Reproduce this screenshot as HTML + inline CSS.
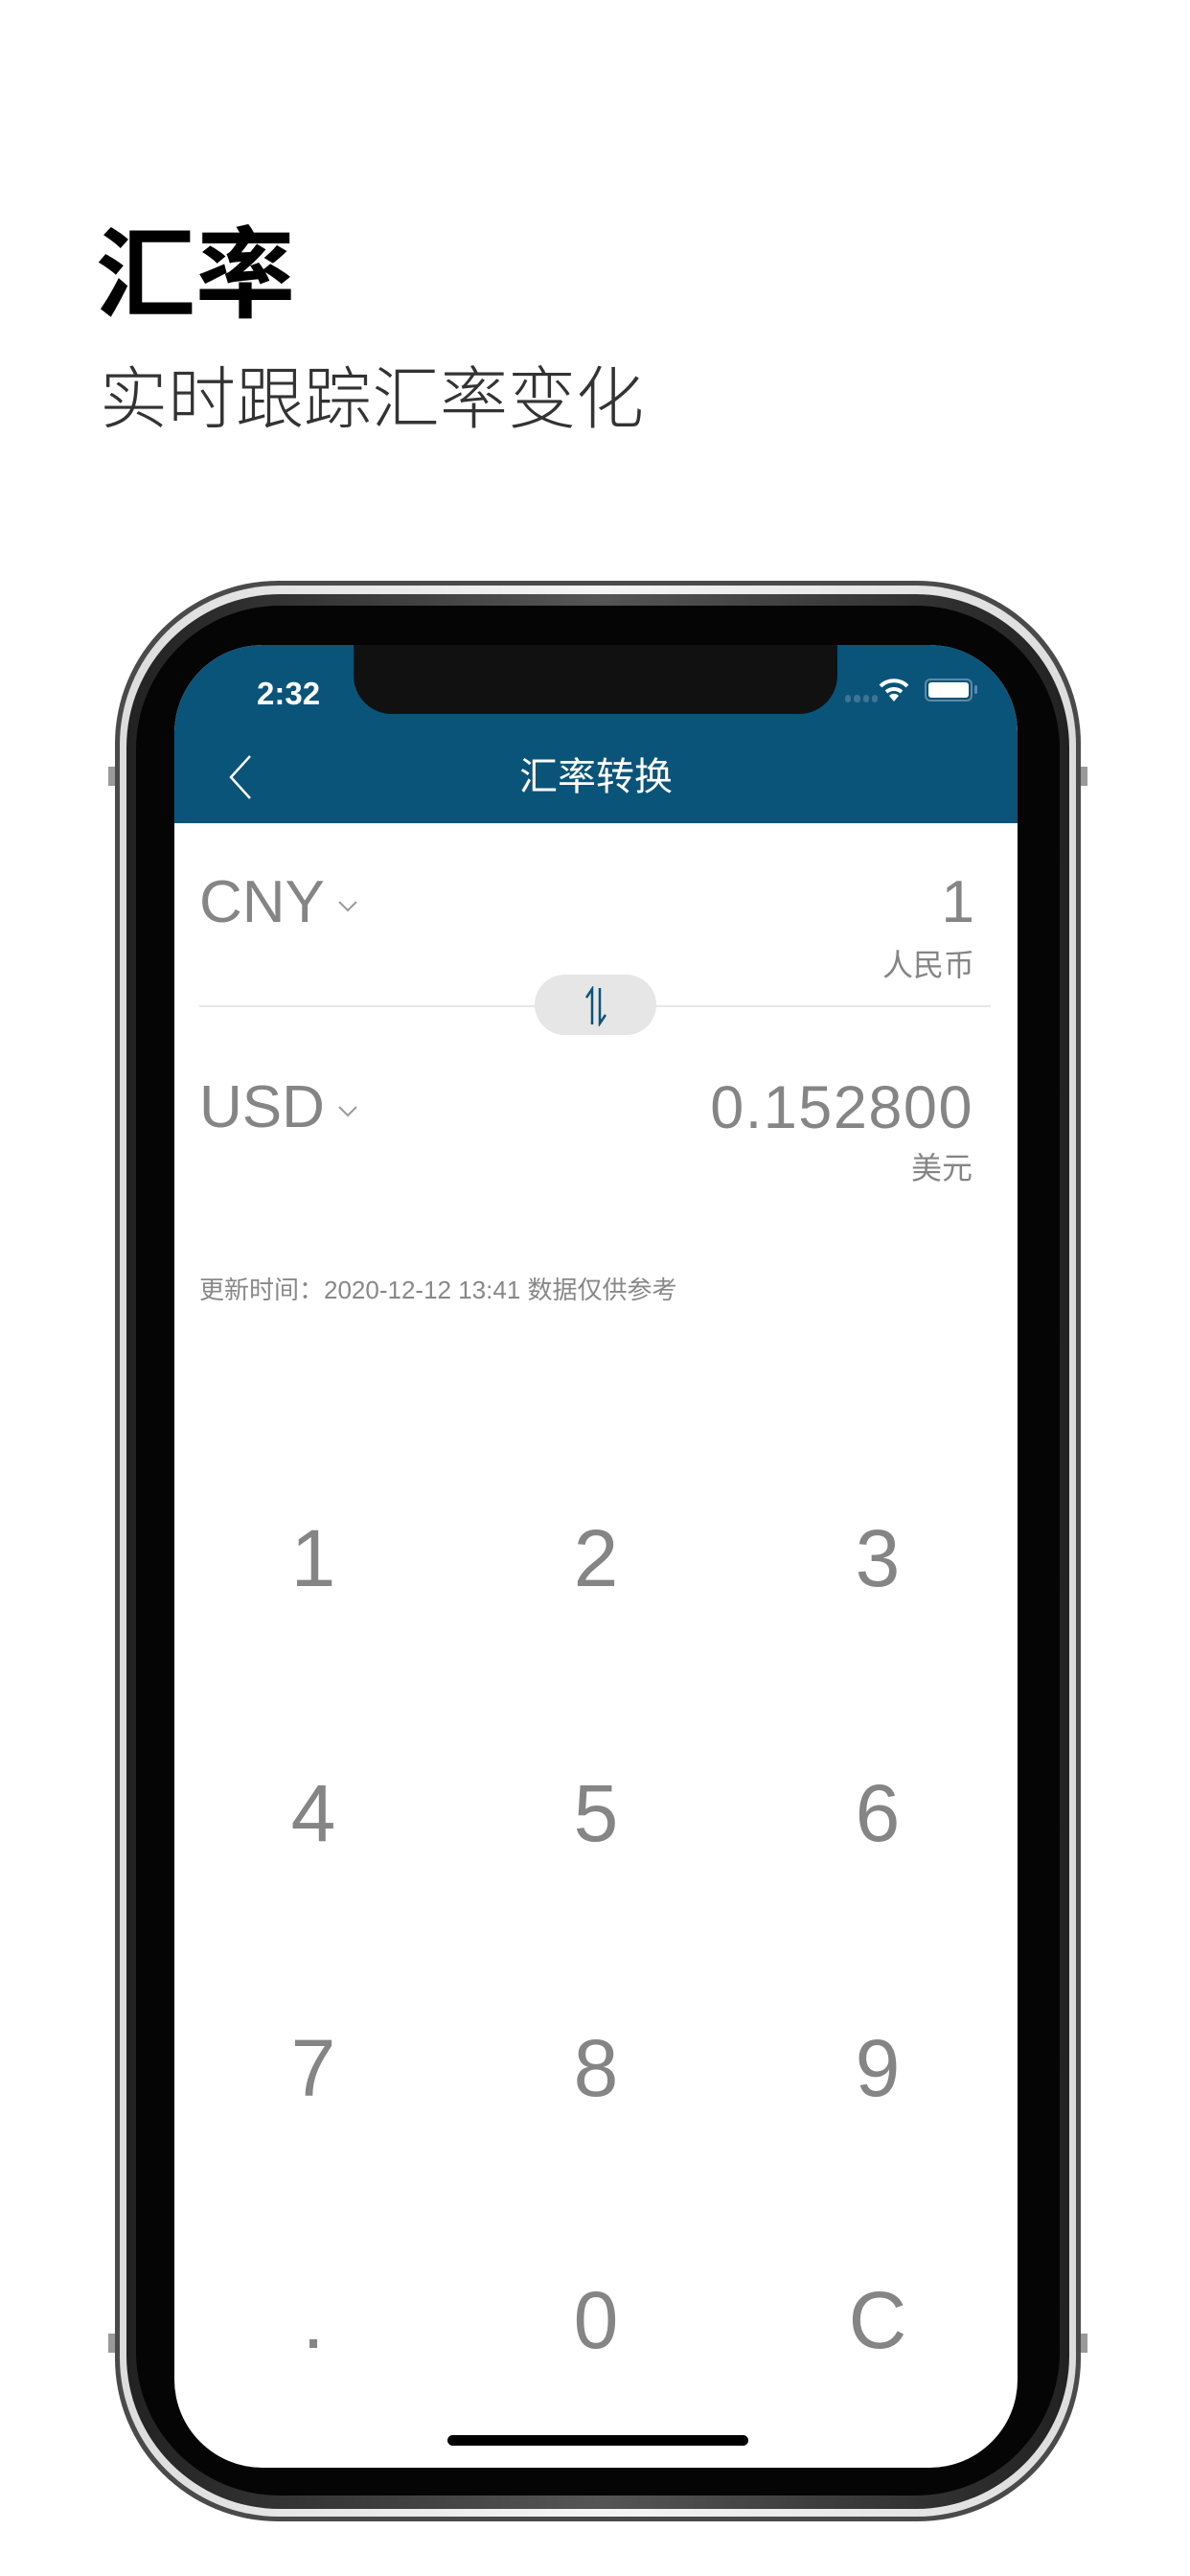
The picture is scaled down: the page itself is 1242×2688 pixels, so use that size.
<!DOCTYPE html>
<html><head><meta charset="utf-8"><style>
*{margin:0;padding:0;box-sizing:border-box}
body{width:1242px;height:2688px;background:#fff;position:relative;overflow:hidden;font-family:"Liberation Sans","Noto Sans CJK SC",sans-serif}
.abs{position:absolute}
.h1{left:100px;top:226px;font-size:104px;font-weight:bold;color:#000;line-height:1;font-family:"Noto Sans CJK SC",sans-serif}
.h2{left:104px;top:376px;font-size:71px;font-weight:200;color:#333;line-height:1;font-family:"Noto Sans CJK SC",sans-serif}
.frame{left:120px;top:606px;width:1008px;height:2025px;border-radius:170px;background:#4a4a4a;}
.f2{left:125px;top:611px;width:998px;height:2015px;border-radius:166px;background:linear-gradient(90deg,#ddd,#f4f4f4 50%,#ddd)}
.f3{left:132px;top:620px;width:984px;height:1998px;border-radius:160px;background:linear-gradient(90deg,#222,#555 50%,#222)}
.f4{left:142px;top:632px;width:964px;height:1972px;border-radius:150px;background:#050505}
.screen{left:182px;top:673px;width:880px;height:1902px;border-radius:92px;background:#fff;overflow:hidden}
.nav{left:0;top:0;width:880px;height:186px;background:#0a5479}
.notch{left:187px;top:-5px;width:505px;height:77px;background:#111;border-radius:0 0 40px 40px}
.btn{left:113px;width:9px;background:#999}
.g{color:#858585}
.key{position:absolute;width:200px;text-align:center;font-size:84px;color:#858585;line-height:1}
</style></head><body>
<div class="abs h1">汇率</div>
<div class="abs h2">实时跟踪汇率变化</div>
<div class="abs btn" style="top:800px;height:20px"></div>
<div class="abs btn" style="top:2435px;height:20px"></div>
<div class="abs btn" style="left:1126px;top:800px;height:20px"></div>
<div class="abs btn" style="left:1126px;top:2435px;height:20px"></div>
<div class="abs frame"></div>
<div class="abs f2"></div>
<div class="abs f3"></div>
<div class="abs f4"></div>
<div class="abs screen">
  <div class="abs nav"></div>
  <div class="abs notch"></div>
  <div class="abs" style="left:86px;top:32px;color:#fff;font-size:33px;font-weight:bold">2:32</div>
  <div class="abs" style="left:700px;top:52px;width:34px;height:8px;display:flex;gap:3px"><i style="flex:1;background:#3d7393;border-radius:3px"></i><i style="flex:1;background:#3d7393;border-radius:3px"></i><i style="flex:1;background:#3d7393;border-radius:3px"></i><i style="flex:1;background:#3d7393;border-radius:3px"></i></div>
  <svg class="abs" style="left:735px;top:34px" width="32" height="26" viewBox="0 0 32 26"><path d="M2 9 A20 20 0 0 1 30 9" stroke="#fff" stroke-width="4" fill="none"/><path d="M8 15 A12 12 0 0 1 24 15" stroke="#fff" stroke-width="4" fill="none"/><path d="M11 19 L16 25 L21 19 A7 7 0 0 0 11 19Z" fill="#fff"/></svg>
  <div class="abs" style="left:783px;top:35px;width:50px;height:24px;border:2px solid #5f8aa5;border-radius:6px;padding:2px"><div style="width:100%;height:100%;background:#fff;border-radius:3px"></div></div>
  <div class="abs" style="left:835px;top:42px;width:3px;height:9px;background:#5f8aa5;border-radius:2px"></div>
  <svg class="abs" style="left:56px;top:114px" width="26" height="48" viewBox="0 0 26 48"><path d="M23 2 L3 24 L23 46" stroke="#fff" stroke-width="2.5" fill="none"/></svg>
  <div class="abs" style="left:0;width:880px;top:110px;text-align:center;color:#fff;font-size:40px;font-family:'Noto Sans CJK SC',sans-serif;line-height:1.2">汇率转换</div>

  <div class="abs g" style="left:26px;top:238px;font-size:62px;line-height:1">CNY</div>
  <svg class="abs" style="left:170px;top:266px" width="22" height="14"><path d="M2 2 L11 11 L20 2" stroke="#999" stroke-width="2" fill="none"/></svg>
  <div class="abs g" style="right:45px;top:238px;font-size:62px;line-height:1">1</div>
  <div class="abs g" style="right:45px;top:316px;font-size:32px;line-height:1;font-family:'Noto Sans CJK SC',sans-serif">人民币</div>
  <div class="abs" style="left:26px;top:376px;width:826px;height:2px;background:#e6e6e6"></div>
  <div class="abs" style="left:376px;top:344px;width:127px;height:63px;border-radius:32px;background:#e6e6e6"></div>
  <svg class="abs" style="left:425px;top:356px" width="30" height="42" viewBox="0 0 30 42"><path d="M11 40 V3 L5 12" stroke="#0a5479" stroke-width="2.5" fill="none"/><path d="M19 2 V39 L25 30" stroke="#0a5479" stroke-width="2.5" fill="none"/></svg>
  <div class="abs g" style="left:26px;top:452px;font-size:62px;line-height:1">USD</div>
  <svg class="abs" style="left:170px;top:480px" width="22" height="14"><path d="M2 2 L11 11 L20 2" stroke="#999" stroke-width="2" fill="none"/></svg>
  <div class="abs g" style="right:46px;top:452px;font-size:63px;line-height:1;letter-spacing:1.5px">0.152800</div>
  <div class="abs g" style="right:47px;top:528px;font-size:32px;line-height:1;font-family:'Noto Sans CJK SC',sans-serif">美元</div>
  <div class="abs" style="left:26px;top:660px;font-size:26px;color:#888;line-height:1">更新时间：2020-12-12 13:41 数据仅供参考</div>

  <div class="key" style="left:45px;top:911px">1</div>
  <div class="key" style="left:340px;top:911px">2</div>
  <div class="key" style="left:634px;top:911px">3</div>
  <div class="key" style="left:45px;top:1177px">4</div>
  <div class="key" style="left:340px;top:1177px">5</div>
  <div class="key" style="left:634px;top:1177px">6</div>
  <div class="key" style="left:45px;top:1443px">7</div>
  <div class="key" style="left:340px;top:1443px">8</div>
  <div class="key" style="left:634px;top:1443px">9</div>
  <div class="key" style="left:45px;top:1706px">.</div>
  <div class="key" style="left:340px;top:1706px">0</div>
  <div class="key" style="left:634px;top:1706px">C</div>
  <div class="abs" style="left:285px;top:1868px;width:314px;height:11px;border-radius:6px;background:#000"></div>
</div>
</body></html>
